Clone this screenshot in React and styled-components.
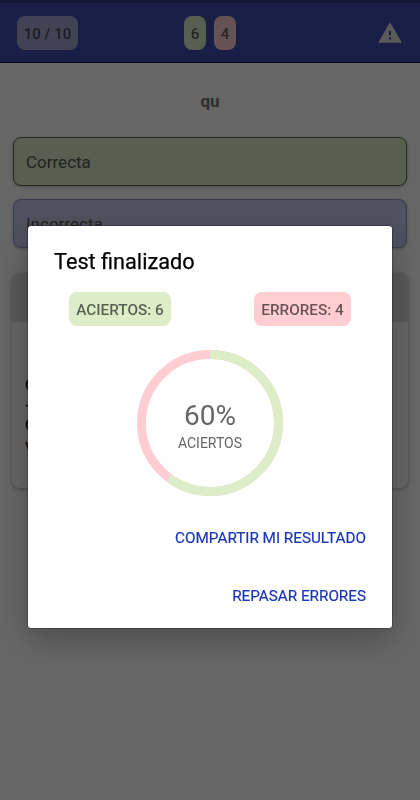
import React from 'react';
import styled, { createGlobalStyle } from 'styled-components';

const colors = {
  primary: '#404bae',
  primaryLight: '#a3a8d4',
  green: '#dcedc8',
  red: '#ffcdd2',
  link: '#1a37b5',
};

const GlobalStyle = createGlobalStyle`
  * {
    box-sizing: border-box;
  }
  body {
    margin: 0;
    font-family: Roboto, "Liberation Sans", sans-serif;
    background: #ffffff;
    overflow: hidden;
  }
`;

const Screen = styled.div`
  height: 800px;
  background: #fff;
`;

const Header = styled.header`
  height: 63px;
  padding: 13px 17px 0;
  display: grid;
  grid-template-columns: 1fr auto 1fr;
  align-items: start;
  background: ${colors.primary};
  border-top: 3px solid #2f3890;
  border-bottom: 1px solid #10123c;
`;

const Chip = styled.span`
  display: block;
  width: ${props => props.$width}px;
  height: 34px;
  line-height: 36px;
  border-radius: 8px;
  background: ${props => props.$color};
  color: rgba(0, 0, 0, 0.6);
  font-size: ${props => props.$size || 15}px;
  font-weight: 500;
  text-align: center;
  white-space: nowrap;
`;

const Score = styled.div`
  display: flex;
  gap: 8px;
`;

const Warning = styled.svg`
  justify-self: end;
  width: 26px;
  height: 26px;
  margin: 4px 0 0;
  fill: #e2e2e2;
`;

const Question = styled.h1`
  margin: 26px 0 24px;
  font-size: 17px;
  line-height: 24px;
  font-weight: 700;
  text-align: center;
  color: #757575;
`;

const Answer = styled.div`
  height: 49px;
  margin: 0 13px 13px;
  padding: 0 12px;
  line-height: 49px;
  font-size: 17px;
  color: #555;
  background: ${props => props.$color};
  border: 1px solid ${props => props.$border};
  border-radius: 8px;
  box-shadow: 0 1px 3px rgba(0, 0, 0, 0.25);
`;

const Card = styled.section`
  height: 215px;
  margin: 25px 12px 0;
  border-radius: 8px;
  background: #fcfcfc;
  box-shadow: 0 1px 4px rgba(0, 0, 0, 0.35);
  overflow: hidden;
`;

const CardHead = styled.div`
  height: 49px;
  background: #dcdcdc;
`;

const CardText = styled.p`
  margin: 0 13px;
  padding-top: 53px;
  font-size: 15px;
  line-height: 20px;
  font-weight: 500;
  color: #222;
`;

const Overlay = styled.div`
  position: fixed;
  inset: 0;
  display: flex;
  justify-content: center;
  align-items: flex-start;
  padding-top: 226px;
  background: rgba(0, 0, 0, 0.6);
`;

const Dialog = styled.div`
  width: 364px;
  height: 402px;
  padding: 22px 26px 0;
  display: flex;
  flex-direction: column;
  border-radius: 3px;
  background: #fff;
  box-shadow: 0 0 2px rgba(0, 0, 0, 0.8), 0 12px 32px rgba(0, 0, 0, 0.26);
`;

const DialogTitle = styled.h2`
  margin: 0;
  font-size: 21.7px;
  line-height: 28px;
  font-weight: 400;
  color: #000;
  -webkit-text-stroke: 0.25px #000;
`;

const Totals = styled.div`
  display: flex;
  justify-content: space-between;
  margin: 16px 15px 24px;
`;

const Chart = styled.div`
  display: grid;
  place-items: center;
  width: 146px;
  height: 146px;
  margin: 0 auto;
  > * {
    grid-area: 1 / 1;
  }
`;

const Ring = styled.svg`
  width: 146px;
  height: 146px;
  transform: rotate(-90deg);
  fill: none;
  stroke-width: 9;
`;

const ChartLabel = styled.div`
  padding-top: 8px;
  text-align: center;
  color: #666;
`;

const Percent = styled.div`
  font-size: 28px;
  line-height: 32px;
`;

const Caption = styled.div`
  font-size: 14px;
  line-height: 23px;
`;

const Actions = styled.div`
  display: flex;
  flex-direction: column;
  align-items: flex-end;
  gap: 34px;
  margin-top: 30px;
`;

const Action = styled.button`
  padding: 0;
  border: 0;
  background: none;
  font-family: inherit;
  font-size: 15.25px;
  line-height: 24px;
  color: ${colors.link};
  -webkit-text-stroke: 0.2px ${colors.link};
  cursor: pointer;
`;

const radius = 68.5;
const circumference = 2 * Math.PI * radius;

function ResultRing({ percent }) {
  const done = (circumference * percent) / 100;
  return (
    <Chart>
      <Ring viewBox="0 0 146 146">
        <circle cx="73" cy="73" r={radius} stroke={colors.red} />
        <circle
          cx="73"
          cy="73"
          r={radius}
          stroke={colors.green}
          strokeDasharray={`${done} ${circumference - done}`}
        />
      </Ring>
      <ChartLabel>
        <Percent>{percent}%</Percent>
        <Caption>ACIERTOS</Caption>
      </ChartLabel>
    </Chart>
  );
}

export default function App() {
  return (
    <Screen>
      <GlobalStyle />
      <Header>
        <Chip $width={61} $color={colors.primaryLight}>10 / 10</Chip>
        <Score>
          <Chip $width={22} $color={colors.green}>6</Chip>
          <Chip $width={22} $color={colors.red}>4</Chip>
        </Score>
        <Warning viewBox="0 0 24 24">
          <path d="M1 21h22L12 2 1 21zm12-3h-2v-2h2v2zm0-4h-2v-4h2v4z" />
        </Warning>
      </Header>
      <Question>qu</Question>
      <Answer $color={colors.green} $border="#5e6752">Correcta</Answer>
      <Answer $color="#c5cae9" $border="#9299cc">Incorrecta</Answer>
      <Card>
        <CardHead />
        <CardText>
          C<br />-<br />C<br />v
        </CardText>
      </Card>
      <Overlay>
        <Dialog>
          <DialogTitle>Test finalizado</DialogTitle>
          <Totals>
            <Chip $width={102} $size={15.3} $color={colors.green}>ACIERTOS: 6</Chip>
            <Chip $width={97} $size={15.3} $color={colors.red}>ERRORES: 4</Chip>
          </Totals>
          <ResultRing percent={60} />
          <Actions>
            <Action>COMPARTIR MI RESULTADO</Action>
            <Action>REPASAR ERRORES</Action>
          </Actions>
        </Dialog>
      </Overlay>
    </Screen>
  );
}
